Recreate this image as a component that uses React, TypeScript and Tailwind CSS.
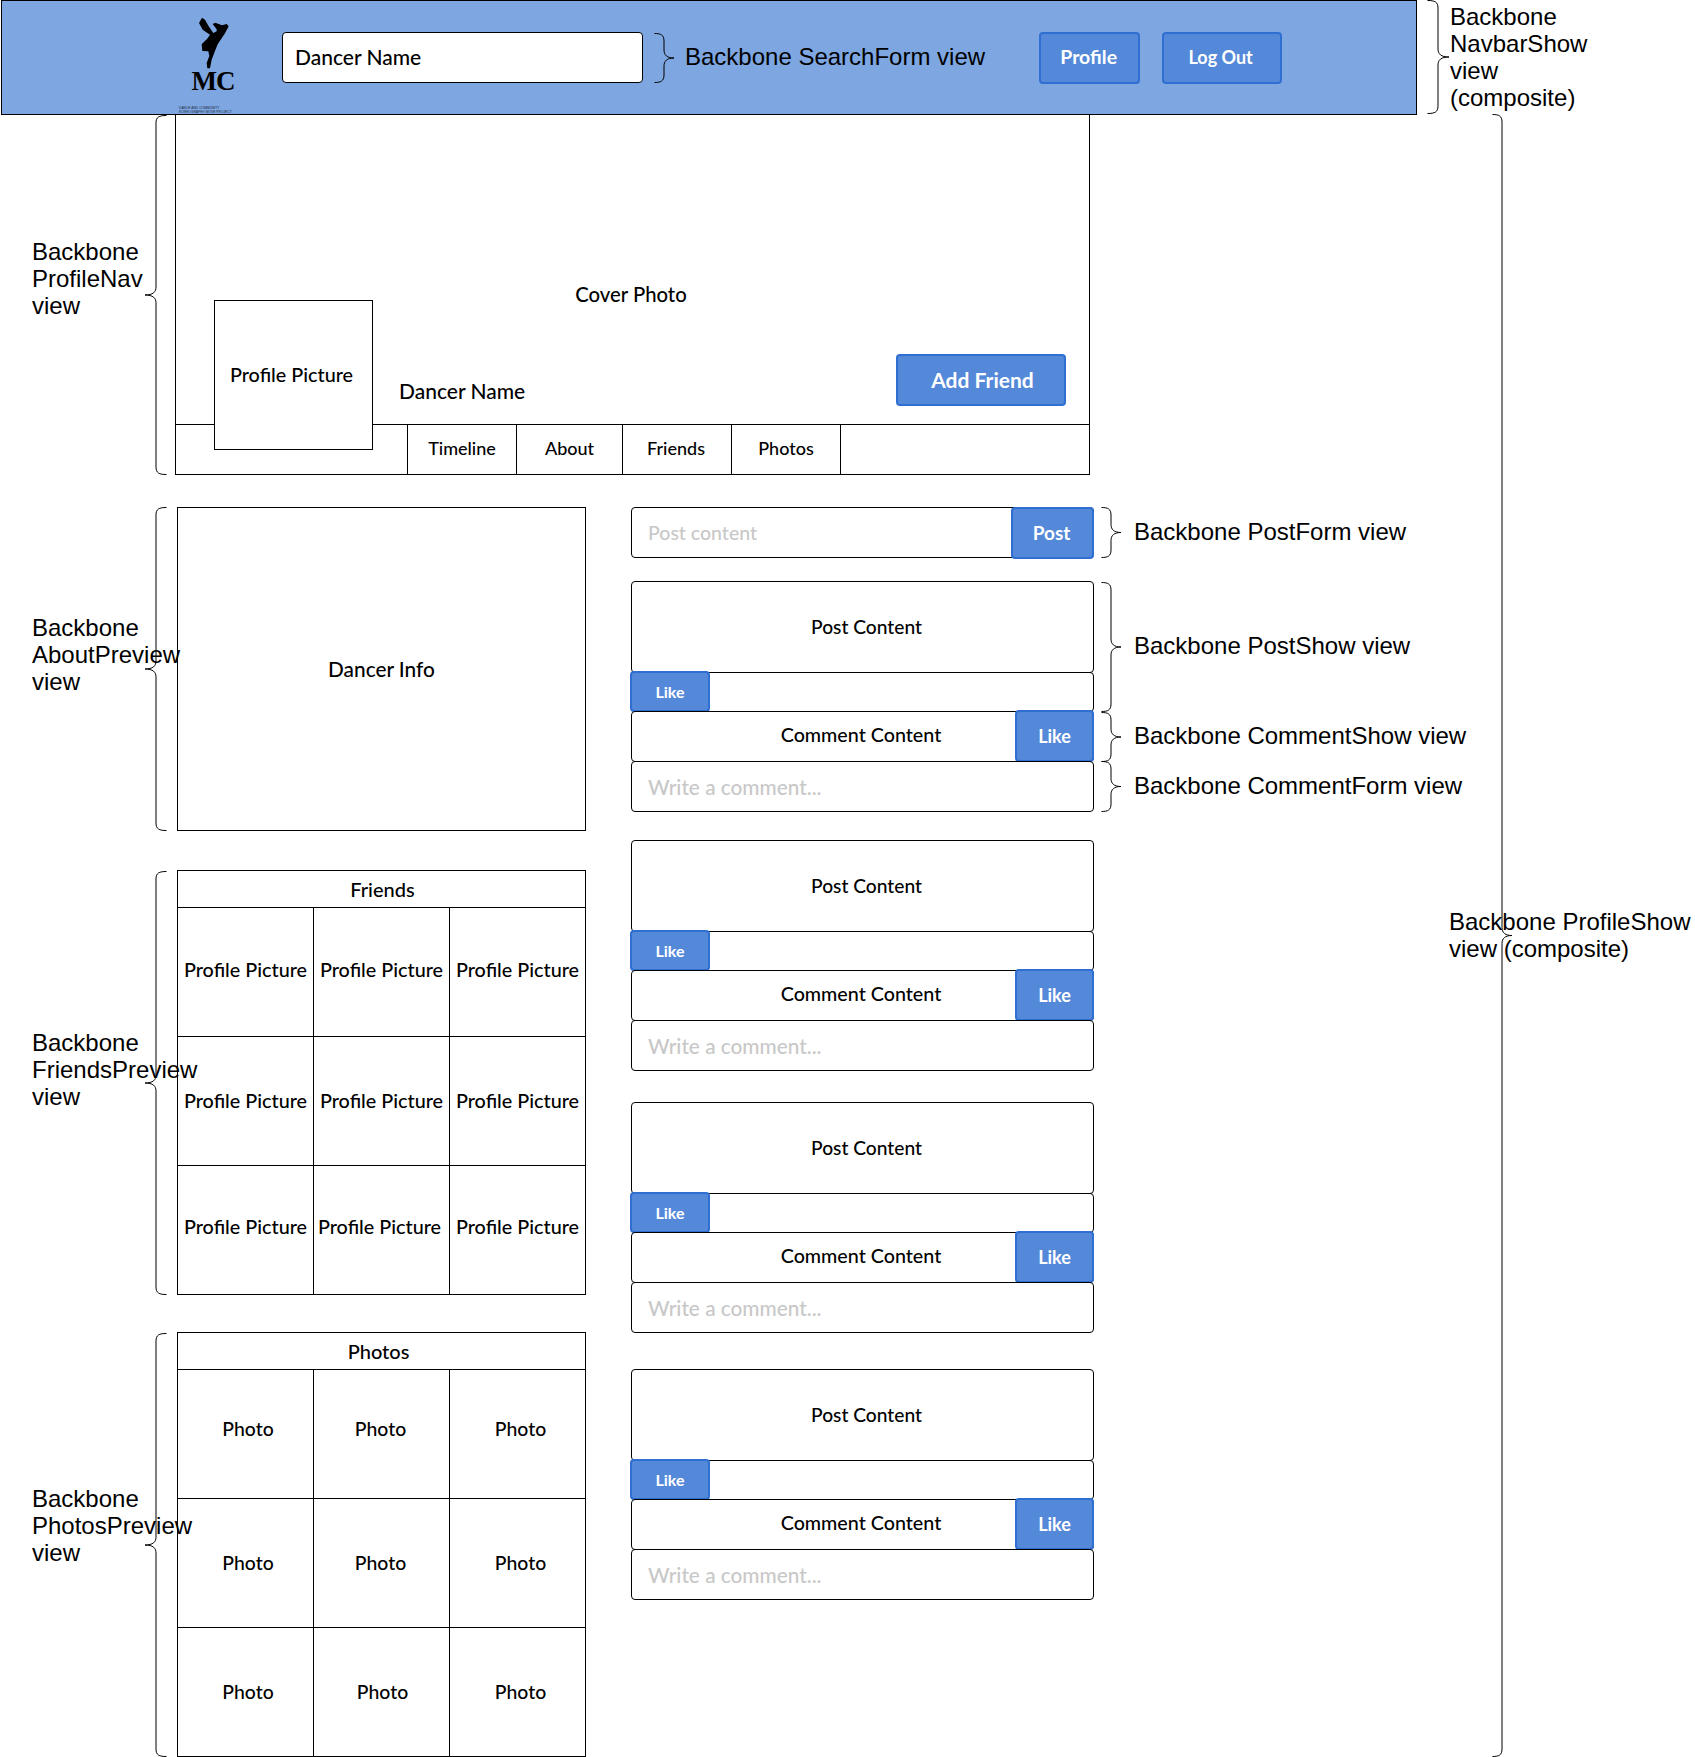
import React from 'react';

const SANS = 'font-["Liberation_Sans",Arial,sans-serif]';

// curly bracket drawn for a given height; tip points left or right
const Brace = ({ h, w = 22, side = 'right' }: { h: number; w?: number; side?: 'left' | 'right' }) => {
  const m = h / 2;
  const s = w / 2;
  const r = Math.min(8, h / 6);
  const d = `M0.5 0.5 C${s - 3} 0.5 ${s} 2 ${s} ${r} L${s} ${m - r} C${s} ${m - 3} ${s + 3} ${m} ${w} ${m} C${s + 3} ${m} ${s} ${m + 3} ${s} ${m + r} L${s} ${h - r} C${s} ${h - 2} ${s - 3} ${h - 0.5} 0.5 ${h - 0.5}`;
  return (
    <svg width={w} height={h} viewBox={`0 0 ${w} ${h}`} className={side === 'left' ? 'block shrink-0 -scale-x-100' : 'block shrink-0'}>
      <path d={d} fill="none" stroke="#000" strokeWidth="1" />
    </svg>
  );
};

const Note = ({ children, className = '' }: { children: React.ReactNode; className?: string }) => (
  <div className={`${SANS} text-[24px] leading-[27px] text-black whitespace-nowrap ${className}`}>{children}</div>
);

const Logo = () => (
  <div className="flex h-full w-[90px] shrink-0 flex-col items-center">
    <svg width="90" height="68" viewBox="0 0 270 204" className="block shrink-0">
      <path
        d="M126 50 L117 66 L128 86 L150 101 L141 114 L125 130 L127 150 L145 151 L148 165 L140 186 L142 202 L150 202 L155 176 L165 150 L173 130 L195 97 L206 76 L200 69 L186 73 L166 65 L158 69 L170 85 L170 91 L160 96 L146 76 L135 56 Z"
        fill="#000"
      />
    </svg>
    <div className="ml-[16px] mt-[1px] h-[22px] font-['Liberation_Serif',serif] text-[27px] font-bold leading-[22px] tracking-[-1px] text-black">MC</div>
    <div className={`${SANS} ml-[2px] mt-[14px] w-[54px] text-left text-[3.3px] leading-[4px] text-[#1c2a44] whitespace-nowrap`}>
      <div>DANCE AND COMMUNITY</div>
      <div>KOREOGRAPHY MOVE PROJECT</div>
    </div>
  </div>
);

const BlueButton = ({ children, className = '' }: { children: React.ReactNode; className?: string }) => (
  <div className={`flex shrink-0 items-center justify-center rounded-[4px] border-2 border-[#2f6fd2] bg-[#5488d8] font-bold text-white ${className}`}>
    {children}
  </div>
);

const Navbar = () => (
  <div className="flex h-[115px] items-start">
    <div className="ml-px flex h-[115px] w-[1416px] shrink-0 items-center border border-black bg-[#7ea6e0] pl-[158px]">
      <Logo />
      <div className="ml-[32px] flex h-[51px] w-[361px] items-center rounded-[4px] border border-black bg-white pb-[2px] pl-[12px] text-[21px] font-medium text-black">Dancer Name</div>
      <div className="ml-[11px]"><Brace h={50} w={20} /></div>
      <Note className="ml-[11px] pb-[2px]">Backbone SearchForm view</Note>
      <BlueButton className="ml-[54px] h-[52px] w-[101px] pb-[2px] pr-[2px] text-[19.5px]">Profile</BlueButton>
      <BlueButton className="ml-[22px] h-[52px] w-[120px] pr-[3px] text-[18px]">Log Out</BlueButton>
    </div>
    <div className="ml-[10px]"><Brace h={114} w={22} /></div>
    <Note className="ml-[1px] pt-[3px]">Backbone<br />NavbarShow<br />view<br />(composite)</Note>
  </div>
);

const SectionLabel = ({ lines, pb }: { lines: string[]; pb: string }) => (
  <Note className={`w-[145px] shrink-0 pl-[32px] ${pb}`}>
    {lines.map((l) => (
      <div key={l}>{l}</div>
    ))}
  </Note>
);

const ProfileNav = () => (
  <div className="flex h-[360px] items-center">
    <SectionLabel lines={['Backbone', 'ProfileNav', 'view']} pb="pb-[33px]" />
    <Brace h={360} side="left" />
    <div className="relative ml-[8px] flex h-[360px] w-[915px] flex-col border-x border-b border-black font-medium">
      <div className="flex h-[310px] flex-col border-b border-black">
        <div className="mt-[166px] pr-[3px] text-center text-[20.3px] leading-[26px]">Cover Photo</div>
        <div className="mt-[47px] flex items-center">
          <div className="ml-[223px] mt-[22px] text-[21px] leading-[26px]">Dancer Name</div>
          <BlueButton className="ml-auto mr-[23px] h-[52px] w-[170px] pl-[3px] text-[21px]">Add Friend</BlueButton>
        </div>
      </div>
      <div className="flex h-[49px] pl-[231px] text-[18px]">
        {[['Timeline', 109, ''], ['About', 106, ''], ['Friends', 109, 'pr-[2px]'], ['Photos', 109, '']].map(([t, w, c]) => (
          <div key={t as string} className={`flex items-center justify-center border-l border-black pb-[2px] ${c}`} style={{ width: w as number }}>
            {t}
          </div>
        ))}
        <div className="w-px bg-black" />
      </div>
      <div className="absolute left-[38px] top-[185px] flex h-[150px] w-[159px] items-center justify-center border border-black bg-white pr-[4px] text-[19.8px]">
        Profile Picture
      </div>
    </div>
  </div>
);

const Grid = ({ title, cell, size, titleClass, cellClass }: { title: string; cell: string; size: string; titleClass: string; cellClass: string[] }) => (
  <div className="w-[409px] border-x border-b border-t border-black font-medium">
    <div className={`flex h-[37px] items-center justify-center border-b border-black text-[20px] ${titleClass}`}>{title}</div>
    <div className="grid grid-cols-[136px_136px_1fr]">
      {cellClass.map((c, i) => (
        <div
          key={i}
          className={`flex items-center justify-center ${size} ${i % 3 !== 2 ? 'border-r border-black' : ''} ${i < 6 ? 'h-[129px] border-b border-black' : 'h-[128px]'} ${c}`}
        >
          {cell}
        </div>
      ))}
    </div>
  </div>
);

const LeftSection = ({ lines, h, pb, children }: { lines: string[]; h: number; pb: string; children: React.ReactNode }) => (
  <div className="flex items-center">
    <SectionLabel lines={lines} pb={pb} />
    <Brace h={h} side="left" />
    <div className="ml-[10px]">{children}</div>
  </div>
);

const Annotated = ({ label, h, on, className = '', children }: { label: string; h: number; on: boolean; className?: string; children: React.ReactNode }) => (
  <div className={`flex items-center ${className}`}>
    <div className="w-[463px] shrink-0">{children}</div>
    {on && (
      <>
        <div className="ml-[7px]"><Brace h={h} w={20} /></div>
        <Note className="ml-[13px] pb-[2px]">{label}</Note>
      </>
    )}
  </div>
);

const PostCard = ({ on = false, className = '' }: { on?: boolean; className?: string }) => (
  <div className={`font-medium ${className}`}>
    <Annotated label="Backbone PostShow view" h={130} on={on}>
      <div className="flex h-[92px] items-center justify-center rounded-[4px] border border-black pl-[8px] text-[19.2px]">Post Content</div>
      <div className="-mt-px h-[40px] rounded-[4px] border border-black">
        <BlueButton className="-ml-[2px] -mt-[2px] h-[41px] w-[80px] text-[16px]">Like</BlueButton>
      </div>
    </Annotated>
    <Annotated label="Backbone CommentShow view" h={50} on={on} className="-mt-px">
      <div className="flex h-[51px] rounded-[4px] border border-black">
        <div className="flex flex-1 items-center justify-center pb-[3px] pl-[75px] text-[19.7px]">Comment Content</div>
        <BlueButton className="-mr-px -mt-[2px] h-[52px] w-[79px] text-[18px]">Like</BlueButton>
      </div>
    </Annotated>
    <Annotated label="Backbone CommentForm view" h={51} on={on} className="-mt-px">
      <div className="flex h-[51px] items-center rounded-[4px] border border-black pl-[16px] text-[20.8px] text-[#c8c8c8]">Write a comment...</div>
    </Annotated>
  </div>
);

const App = () => (
  <div className="relative h-[1757px] w-[1695px] overflow-hidden bg-white font-['Lato',sans-serif] text-black">
    <Navbar />
    <ProfileNav />
    <div className="mt-[32px] flex items-start">
      <div className="flex w-[631px] shrink-0 flex-col">
        <LeftSection lines={['Backbone', 'AboutPreview', 'view']} h={324} pb="pb-[30px]">
          <div className="flex h-[324px] w-[409px] items-center justify-center border border-black text-[20.8px] font-medium">Dancer Info</div>
        </LeftSection>
        <div className="mt-[39px]">
          <LeftSection lines={['Backbone', 'FriendsPreview', 'view']} h={424} pb="pb-[26px]">
            <Grid
              title="Friends"
              titleClass="pl-[2px]"
              size="text-[19.8px]"
              cell="Profile Picture"
              cellClass={['pb-[5px]', 'pb-[5px]', 'pb-[5px]', 'pb-[1px]', 'pb-[1px]', 'pb-[1px]', 'pb-[6px]', 'pb-[6px] pr-[4px]', 'pb-[6px]']}
            />
          </LeftSection>
        </div>
        <div className="mt-[37px]">
          <LeftSection lines={['Backbone', 'PhotosPreview', 'view']} h={424} pb="pb-[39px]">
            <Grid
              title="Photos"
              titleClass="pr-[6px]"
              size="text-[19.4px]"
              cell="Photo"
              cellClass={['pl-[5px] pb-[10px]', 'pr-[2px] pb-[10px]', 'pl-[6px] pb-[10px]', 'pl-[5px]', 'pr-[2px]', 'pl-[6px]', 'pl-[5px]', 'pl-[2px]', 'pl-[6px]']}
            />
          </LeftSection>
        </div>
      </div>
      <div className="flex flex-col">
        <Annotated label="Backbone PostForm view" h={51} on>
          <div className="flex h-[51px] rounded-[4px] border border-black font-medium">
            <div className="flex flex-1 items-center pl-[16px] text-[19.5px] text-[#c8c8c8]">Post content</div>
            <BlueButton className="-my-px -mr-px h-[52px] w-[83px] pr-[2px] text-[19px]">Post</BlueButton>
          </div>
        </Annotated>
        <PostCard on className="mt-[23px]" />
        <PostCard className="mt-[28px]" />
        <PostCard className="mt-[31px]" />
        <PostCard className="mt-[36px]" />
      </div>
    </div>
    <div className="absolute left-[1492px] top-[114px]"><Brace h={1643} w={20} /></div>
    <Note className="absolute left-[1449px] top-[908px]">Backbone ProfileShow<br />view (composite)</Note>
  </div>
);

export default App;
